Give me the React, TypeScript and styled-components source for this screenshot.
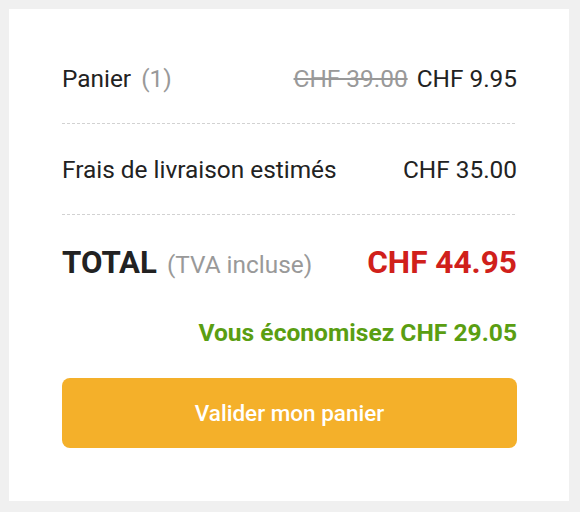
import React from "react";
import styled, { createGlobalStyle } from "styled-components";

const GlobalStyle = createGlobalStyle`
  html, body {
    margin: 0;
    padding: 0;
    background: #f0f0f0;
  }
  body {
    font-family: Roboto, "Liberation Sans", Arial, sans-serif;
    color: #222;
  }
  * { box-sizing: border-box; }
`;

const Page = styled.div`
  padding: 9px 11px 11px 9px;
`;

const Card = styled.section`
  width: 560px;
  height: 492px;
  background: #fff;
  padding: 24px 52px 0 53px;
  display: flex;
  flex-direction: column;
`;

const SummaryRow = styled.div`
  display: flex;
  justify-content: space-between;
  align-items: baseline;
  padding: 32px 0 31px;
  background-image: linear-gradient(to right, #d2d2d2 60%, transparent 60%);
  background-size: 5px 1px;
  background-repeat: repeat-x;
  background-position: left bottom;
  font-size: 24.4px;
  line-height: 28px;
`;

const Label = styled.span`
  display: flex;
  align-items: baseline;
  gap: 10px;
  color: #222;
`;

const Muted = styled.span`
  color: #999;
`;

const Prices = styled.span`
  display: flex;
  align-items: baseline;
  gap: 9px;
`;

const OldPrice = styled.s`
  color: #999;
  text-decoration-thickness: 2px;
`;

const Price = styled.span`
  color: #222;
`;

const TotalRow = styled.div`
  display: flex;
  justify-content: space-between;
  align-items: baseline;
  padding-top: 29px;
  line-height: 37px;
`;

const TotalLabel = styled.span`
  display: flex;
  align-items: baseline;
  gap: 10px;
`;

const TotalTitle = styled.strong`
  font-size: 31.2px;
  font-weight: 700;
  color: #222;
`;

const TotalNote = styled.span`
  font-size: 24.4px;
  color: #999;
`;

const TotalPrice = styled.strong`
  font-size: 31.6px;
  font-weight: 700;
  color: #d0201b;
`;

const Savings = styled.p`
  margin: 36px 0 0;
  text-align: right;
  font-size: 24.6px;
  line-height: 28px;
  font-weight: 700;
  color: #5a9e12;
`;

const CheckoutButton = styled.button`
  margin-top: 31px;
  width: 100%;
  height: 70px;
  border: none;
  border-radius: 8px;
  background: #f4b02a;
  color: #fff;
  font-family: Roboto, "Liberation Sans", Arial, sans-serif;
  font-size: 22.5px;
  font-weight: 500;
  cursor: pointer;
`;

export default function App() {
  return (
    <>
      <GlobalStyle />
      <Page>
        <Card>
          <SummaryRow>
            <Label>
              Panier <Muted>(1)</Muted>
            </Label>
            <Prices>
              <OldPrice>CHF 39.00</OldPrice>
              <Price>CHF 9.95</Price>
            </Prices>
          </SummaryRow>
          <SummaryRow>
            <Label>Frais de livraison estimés</Label>
            <Price>CHF 35.00</Price>
          </SummaryRow>
          <TotalRow>
            <TotalLabel>
              <TotalTitle>TOTAL</TotalTitle>
              <TotalNote>(TVA incluse)</TotalNote>
            </TotalLabel>
            <TotalPrice>CHF 44.95</TotalPrice>
          </TotalRow>
          <Savings>Vous économisez CHF 29.05</Savings>
          <CheckoutButton>Valider mon panier</CheckoutButton>
        </Card>
      </Page>
    </>
  );
}
